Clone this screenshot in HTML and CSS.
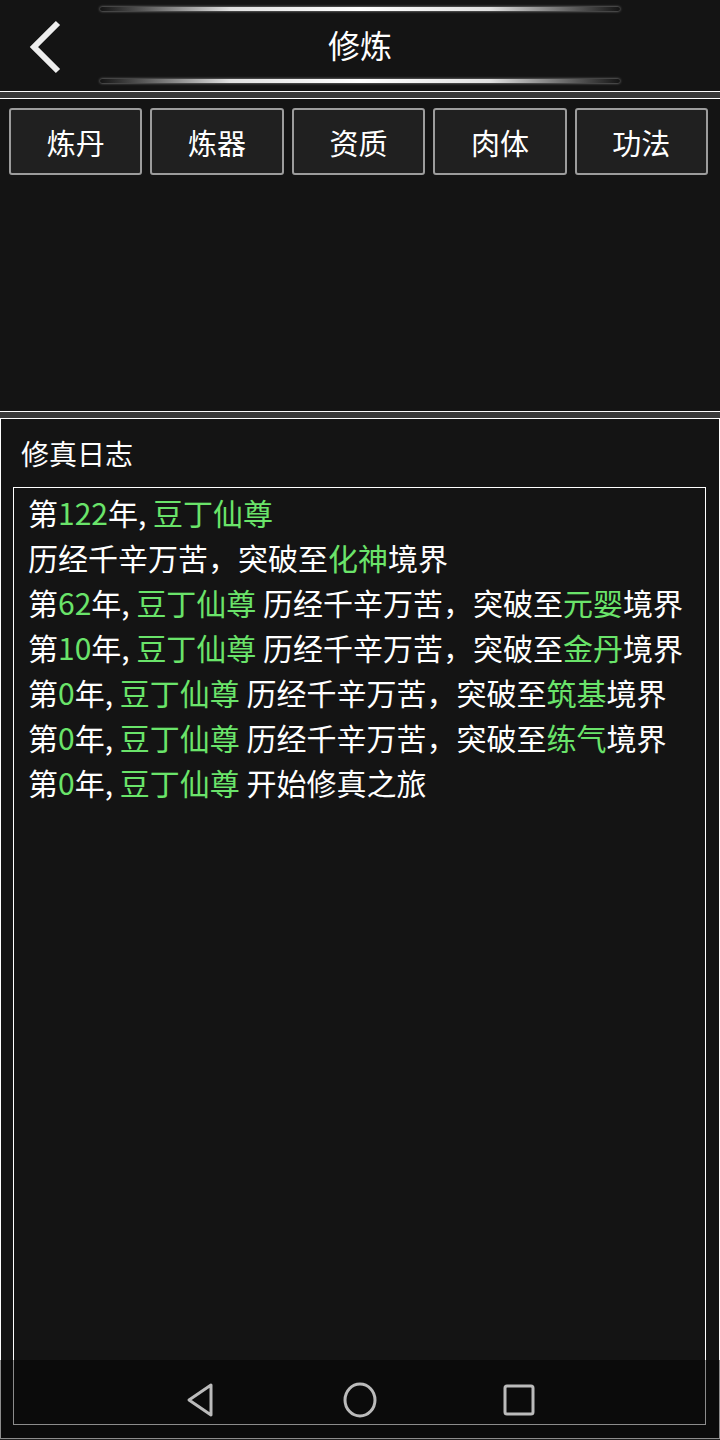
FILE: index.html
```html
<!DOCTYPE html>
<html lang="zh">
<head>
    <meta charset="UTF-8">
    <meta name="viewport" content="width=device-width, initial-scale=1.0">
    <title>修炼</title>
    <link rel="stylesheet" href="styles.css">
</head>
<body>
    <div class="header">
        <div class="glow"></div>
        <div class="title-row">
            <a class="back" href="#">
                <svg width="40" height="56" viewBox="0 0 40 56">
                    <polyline points="30,4 6,28 30,52" fill="none" stroke="#eeeeee" stroke-width="6"/>
                </svg>
            </a>
            <h1>修炼</h1>
        </div>
        <div class="glow"></div>
    </div>

    <div class="panel">
        <div class="tabs">
            <button>炼丹</button>
            <button>炼器</button>
            <button>资质</button>
            <button>肉体</button>
            <button>功法</button>
        </div>
    </div>

    <div class="log-section">
        <h2>修真日志</h2>
        <div class="log-box">
            <p><span class="seg">第<span class="hl">122</span>年, <span class="hl">豆丁仙尊</span></span> <span class="seg">历经千辛万苦，突破至<span class="hl">化神</span>境界</span></p>
            <p><span class="seg">第<span class="hl">62</span>年, <span class="hl">豆丁仙尊</span></span> <span class="seg">历经千辛万苦，突破至<span class="hl">元婴</span>境界</span></p>
            <p><span class="seg">第<span class="hl">10</span>年, <span class="hl">豆丁仙尊</span></span> <span class="seg">历经千辛万苦，突破至<span class="hl">金丹</span>境界</span></p>
            <p><span class="seg">第<span class="hl">0</span>年, <span class="hl">豆丁仙尊</span></span> <span class="seg">历经千辛万苦，突破至<span class="hl">筑基</span>境界</span></p>
            <p><span class="seg">第<span class="hl">0</span>年, <span class="hl">豆丁仙尊</span></span> <span class="seg">历经千辛万苦，突破至<span class="hl">练气</span>境界</span></p>
            <p><span class="seg">第<span class="hl">0</span>年, <span class="hl">豆丁仙尊</span></span> <span class="seg">开始修真之旅</span></p>
        </div>
    </div>

    <div class="nav-bar">
        <svg width="32" height="36" viewBox="0 0 32 36">
            <path d="M26,3 L4,18 L26,33 Z" fill="none" stroke="#bbbbbb" stroke-width="3" stroke-linejoin="round"/>
        </svg>
        <svg width="36" height="36" viewBox="0 0 36 36">
            <ellipse cx="18" cy="18" rx="15" ry="16" fill="none" stroke="#bbbbbb" stroke-width="3"/>
        </svg>
        <svg width="32" height="32" viewBox="0 0 32 32">
            <rect x="2" y="2" width="28" height="28" rx="2" fill="none" stroke="#bbbbbb" stroke-width="3"/>
        </svg>
    </div>
</body>
</html>
```

FILE: styles.css
```css
body {
    margin: 0;
    padding: 0;
    background-color: #3a3a3a;
    font-family: "Noto Sans CJK SC", "Noto Sans", sans-serif;
    color: #ffffff;
}
.header {
    height: 92px;
    box-sizing: border-box;
    background-color: #141414;
    border-bottom: 1px solid #ffffff;
    display: flex;
    flex-direction: column;
    align-items: center;
    padding-top: 7px;
}
.glow {
    width: 520px;
    height: 4px;
    border-radius: 2px;
    background: linear-gradient(to right, rgba(255,255,255,0), #e0e0e0 25%, #ffffff 50%, #e0e0e0 75%, rgba(255,255,255,0));
    box-shadow: 0 0 3px rgba(255, 255, 255, 0.6);
}
.title-row {
    width: 100%;
    flex-grow: 1;
    display: flex;
    align-items: center;
    justify-content: center;
    position: relative;
}
.title-row h1 {
    margin: 0;
    font-size: 32px;
    font-weight: normal;
    line-height: 1;
    margin-top: -2px;
}
.back {
    position: absolute;
    left: 28px;
    top: 8px;
    display: block;
    line-height: 0;
}
.glow:last-child {
    margin-bottom: 8px;
}
.panel {
    margin-top: 6px;
    height: 314px;
    box-sizing: border-box;
    background-color: #141414;
    border-top: 1px solid #ffffff;
    border-bottom: 1px solid #ffffff;
    padding: 9px 12px 0 9px;
}
.tabs {
    display: flex;
    gap: 8px;
}
.tabs button {
    flex: 1;
    height: 67px;
    background-color: #202020;
    border: 2px solid #9c9c9c;
    border-radius: 3px;
    color: #ffffff;
    font-family: "Noto Sans CJK SC", "Noto Sans", sans-serif;
    font-size: 29px;
    padding: 0;
}
.log-section {
    margin-top: 6px;
    height: 1021px;
    box-sizing: border-box;
    background-color: #141414;
    border: 1px solid #ffffff;
    padding: 14px 13px 13px 12px;
    display: flex;
    flex-direction: column;
}
.log-section h2 {
    margin: 0 0 14px 8px;
    font-size: 28px;
    font-weight: normal;
    line-height: 40px;
}
.log-box {
    flex-grow: 1;
    border: 1px solid #ffffff;
    padding: 2px 14px;
}
.log-box p {
    margin: 0;
    font-size: 30px;
    line-height: 45px;
}
.seg {
    white-space: nowrap;
}
.hl {
    color: #6ae46a;
}
.nav-bar {
    position: fixed;
    left: 0;
    bottom: 0;
    width: 100%;
    height: 80px;
    background-color: rgba(0, 0, 0, 0.45);
    display: flex;
    justify-content: center;
    align-items: center;
    gap: 125px;
}
```
